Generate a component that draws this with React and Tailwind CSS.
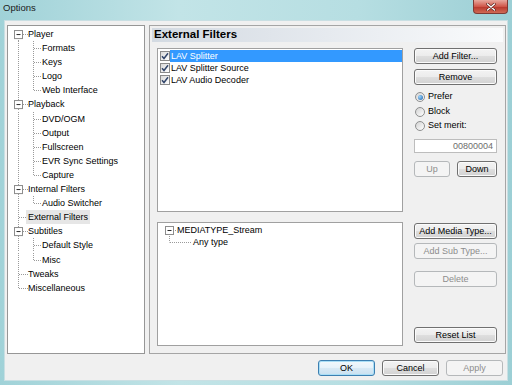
import React from 'react';

const treeItems = [
  { label: 'Player', level: 0, expanded: true, first: true },
  { label: 'Formats', level: 1 },
  { label: 'Keys', level: 1 },
  { label: 'Logo', level: 1 },
  { label: 'Web Interface', level: 1, lastChild: true },
  { label: 'Playback', level: 0, expanded: true },
  { label: 'DVD/OGM', level: 1 },
  { label: 'Output', level: 1 },
  { label: 'Fullscreen', level: 1 },
  { label: 'EVR Sync Settings', level: 1 },
  { label: 'Capture', level: 1, lastChild: true },
  { label: 'Internal Filters', level: 0, expanded: true },
  { label: 'Audio Switcher', level: 1, lastChild: true },
  { label: 'External Filters', level: 0, selected: true },
  { label: 'Subtitles', level: 0, expanded: true },
  { label: 'Default Style', level: 1 },
  { label: 'Misc', level: 1, lastChild: true },
  { label: 'Tweaks', level: 0 },
  { label: 'Miscellaneous', level: 0, last: true },
];

const dot = { stroke: '#9a9a9a', strokeWidth: 1, strokeDasharray: '1 1' };

function Expander({ x, y }) {
  return (
    <g>
      <rect x={x} y={y} width="8" height="8" fill="#fff" stroke="#8d8d8d" />
      <line x1={x + 2} y1={y + 4} x2={x + 6} y2={y + 4} stroke="#2b2b2b" />
    </g>
  );
}

function Connector({ item }) {
  if (item.level === 0) {
    return (
      <svg width="20" viewBox="0 0 20 14" preserveAspectRatio="none" className="h-full shrink-0">
        <line x1="10.5" y1={item.first ? 7 : 0} x2="10.5" y2={item.last ? 7.5 : 14} {...dot} />
        <line x1="11" y1="7.5" x2="20" y2="7.5" {...dot} />
        {item.expanded && <Expander x={6.5} y={3.5} />}
      </svg>
    );
  }
  return (
    <svg width="34" viewBox="0 0 34 14" preserveAspectRatio="none" className="h-full shrink-0">
      <line x1="10.5" y1="0" x2="10.5" y2="14" {...dot} />
      <line x1="25.5" y1="0" x2="25.5" y2={item.lastChild ? 7.5 : 14} {...dot} />
      <line x1="26" y1="7.5" x2="33" y2="7.5" {...dot} />
    </svg>
  );
}

function Btn({ children, className = '', disabled, primary }) {
  let look =
    'border-[#707070] text-black bg-[linear-gradient(#f3f3f3_0%,#ececec_48%,#dedede_52%,#d2d2d2_100%)] shadow-[inset_0_0_0_1px_#fbfbfb]';
  if (disabled) look = 'border-[#b5b8ba] text-[#8d8d8d] bg-[#f4f4f4]';
  if (primary)
    look =
      'border-[#3c7fb1] text-black bg-[linear-gradient(#f1f8fc_0%,#e6f2fa_48%,#d7e9f5_52%,#c9e0f0_100%)] shadow-[inset_0_0_0_1px_#a9def6]';
  return (
    <div
      className={`h-[16px] border rounded-[3px] flex items-center justify-center leading-none ${look} ${className}`}
    >
      {children}
    </div>
  );
}

function Check() {
  return (
    <span className="w-[10px] h-[10px] border border-[#8a8a8a] bg-[linear-gradient(135deg,#d9d9d9,#ffffff)] flex items-center justify-center shrink-0">
      <svg width="8" height="8" viewBox="0 0 8 8">
        <path d="M1 4.2 L3 6.5 L7 1.2" fill="none" stroke="#32466b" strokeWidth="1.5" />
      </svg>
    </span>
  );
}

function Radio({ checked, label }) {
  return (
    <div className="flex items-center h-[12px] gap-[3px] pl-[1px]">
      <span className="w-[10px] h-[10px] rounded-full border border-[#8e8f8f] bg-[linear-gradient(135deg,#d2d2d2,#ffffff)] flex items-center justify-center">
        {checked && (
          <span className="w-[5px] h-[5px] rounded-full bg-[radial-gradient(circle_at_35%_35%,#9ad6ff,#1d5ea6)]" />
        )}
      </span>
      <span>{label}</span>
    </div>
  );
}

const filters = ['LAV Splitter', 'LAV Splitter Source', 'LAV Audio Decoder'];

export default function App() {
  return (
    <div className="w-[512px] h-[385px] flex flex-col bg-[linear-gradient(90deg,#a0d2d8,#c2e4e7_35%,#b6dee2_70%,#9ccfd5)] font-['Liberation_Sans',Arial,sans-serif] text-[9px] text-black overflow-hidden">
      {/* title bar */}
      <div className="h-[20px] flex items-start justify-between pl-[3px] pr-[4px]">
        <span className="text-[9.5px] text-[#1b1b1b] leading-[16px]">Options</span>
        <div className="w-[35px] h-[14px] rounded-b-[4px] border border-t-0 border-[#7f3a34] bg-[linear-gradient(#e8a99e,#d0574a_50%,#b8352a_51%,#cf6a55)] flex items-center justify-center">
          <svg width="10" height="8" viewBox="0 0 10 8">
            <path d="M1.5 1 L8.5 7 M8.5 1 L1.5 7" stroke="#5a2019" strokeWidth="2.6" strokeLinecap="round" />
            <path d="M1.5 1 L8.5 7 M8.5 1 L1.5 7" stroke="#ffffff" strokeWidth="1.4" strokeLinecap="round" />
          </svg>
        </div>
      </div>

      {/* client area */}
      <div className="mx-[4px] mb-[4px] flex-1 bg-[#f0f0f0] border border-[#c9dfe3] flex flex-col pt-[4px] pl-[2px] pr-[1px]">
        <div className="flex gap-[4px] h-[329px]">
          {/* tree */}
          <div className="w-[138px] h-full bg-white border border-[#969696] pt-[1px]">
            {treeItems.map((item) => (
              <div key={item.label} className="h-[14.1px] flex items-stretch">
                <Connector item={item} />
                <span
                  className={`leading-[14px] whitespace-nowrap ${
                    item.selected ? 'bg-[#e6e6e6] px-[2px] -ml-[2px]' : ''
                  }`}
                >
                  {item.label}
                </span>
              </div>
            ))}
          </div>

          {/* page */}
          <div className="w-[357px] h-full border border-[#a5a5a5] flex flex-col">
            <div className="mx-[2px] mt-[2px] h-[14px] bg-[linear-gradient(90deg,#d3dae2,#e6eaef_50%,#fafbfc)] flex items-center pl-[2px]">
              <span className="text-[11.5px] font-bold leading-none">External Filters</span>
            </div>

            <div className="pl-[7px] pt-[6px] flex gap-[11px]">
              <div className="w-[246px] h-[164px] bg-white border border-[#a0a0a0] pt-[1px]">
                {filters.map((f, i) => (
                  <div key={f} className="h-[12px] flex items-center pl-[2px]">
                    <Check />
                    <span
                      className={`flex-1 h-full leading-[12px] pl-[1px] ${
                        i === 0 ? 'bg-[#3399ff] text-white' : ''
                      }`}
                    >
                      {f}
                    </span>
                  </div>
                ))}
              </div>

              <div className="w-[83px] flex flex-col">
                <Btn>Add Filter...</Btn>
                <Btn className="mt-[5px]">Remove</Btn>
                <div className="mt-[6px] flex flex-col gap-[2.5px]">
                  <Radio checked label="Prefer" />
                  <Radio label="Block" />
                  <Radio label="Set merit:" />
                </div>
                <div className="mt-[7px] h-[14px] bg-white border border-[#bdbdbd] text-[#6d6d6d] text-right pr-[3px] leading-[12px]">
                  00800004
                </div>
                <div className="mt-[8px] flex justify-between">
                  <Btn disabled className="w-[36px]">
                    Up
                  </Btn>
                  <Btn className="w-[40px]">Down</Btn>
                </div>
              </div>
            </div>

            <div className="pl-[7px] pt-[10px] flex gap-[11px]">
              <div className="w-[246px] h-[124px] bg-white border border-[#a0a0a0] pt-[1px]">
                <div className="h-[12px] flex items-stretch">
                  <svg width="19" height="12" viewBox="0 0 19 12" className="shrink-0">
                    <line x1="11.5" y1="10" x2="11.5" y2="12" {...dot} />
                    <line x1="15" y1="6.5" x2="19" y2="6.5" {...dot} />
                    <Expander x={7.5} y={2.5} />
                  </svg>
                  <span className="leading-[12px]">MEDIATYPE_Stream</span>
                </div>
                <div className="h-[12px] flex items-stretch">
                  <svg width="35" height="12" viewBox="0 0 35 12" className="shrink-0">
                    <line x1="11.5" y1="0" x2="11.5" y2="6.5" {...dot} />
                    <line x1="12" y1="6.5" x2="34" y2="6.5" {...dot} />
                  </svg>
                  <span className="leading-[12px]">Any type</span>
                </div>
              </div>

              <div className="w-[83px] flex flex-col pt-[1px]">
                <Btn>Add Media Type...</Btn>
                <Btn disabled className="mt-[4px]">
                  Add Sub Type...
                </Btn>
                <Btn disabled className="mt-[12px]">
                  Delete
                </Btn>
                <Btn className="mt-[40px]">Reset List</Btn>
              </div>
            </div>
          </div>
        </div>

        {/* bottom buttons */}
        <div className="mt-[6px] flex justify-end gap-[7px] pr-[3px]">
          <Btn primary className="w-[57px]">
            OK
          </Btn>
          <Btn className="w-[57px]">Cancel</Btn>
          <Btn disabled className="w-[57px]">
            Apply
          </Btn>
        </div>
      </div>
    </div>
  );
}
